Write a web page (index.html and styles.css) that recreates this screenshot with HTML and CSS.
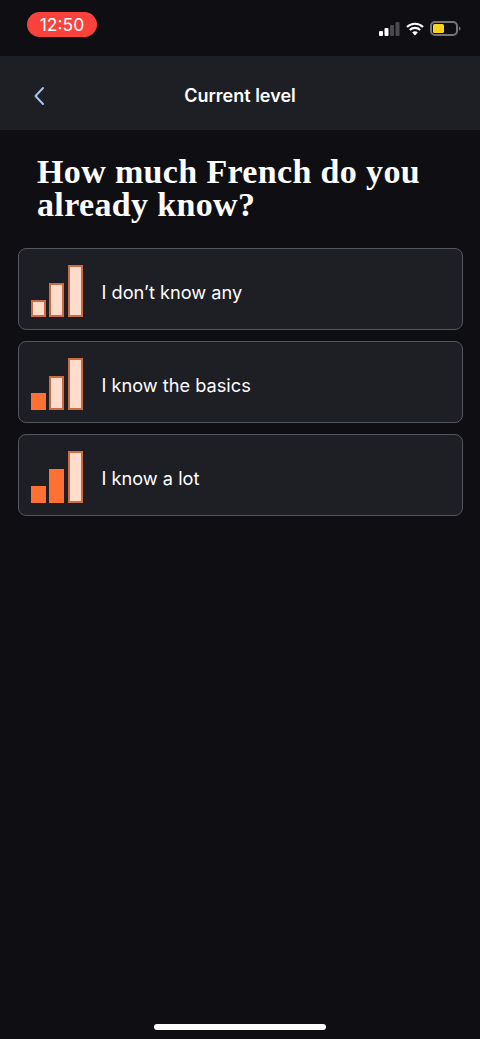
FILE: index.html
```html
<!DOCTYPE html>
<html lang="en">
<head>
<meta charset="utf-8">
<title>Current level</title>
<link rel="stylesheet" href="styles.css">
</head>
<body>
<div class="screen">
  <div class="status">
    <span class="time">12:50</span>
    <div class="status-icons">
      <svg class="signal" width="21" height="14" viewBox="0 0 21 14"><rect x="0" y="9" width="4" height="5" rx="1" fill="#fff"/><rect x="5.500" y="6" width="4" height="8" rx="1" fill="#fff"/><rect x="11" y="3" width="4" height="11" rx="1" fill="#4a4a4e"/><rect x="16.500" y="0" width="4" height="14" rx="1" fill="#4a4a4e"/></svg>
      <svg class="wifi" width="18" height="14" viewBox="0 0 18 14"><path d="M1 5a11.500 11.500 0 0 1 16 0M3.800 8a7.500 7.500 0 0 1 10.400 0" fill="none" stroke="#fff" stroke-width="2.200"/><path d="M6.200 10.400a3.800 3.800 0 0 1 5.600 0L9 13.600z" fill="#fff"/></svg>
      <svg class="battery" width="31" height="15" viewBox="0 0 31 15"><rect x="1" y="1" width="26" height="13" rx="4" fill="none" stroke="#77777a" stroke-width="2"/><rect x="3" y="3" width="11" height="9" rx="1.500" fill="#fcd21e"/><path d="M29 5.500c1.200.3 1.500 1 1.500 2s-.3 1.700-1.500 2z" fill="#77777a"/></svg>
    </div>
  </div>
  <header class="nav">
    <svg class="back" width="12" height="20" viewBox="0 0 12 20"><path d="M10 2 2.500 10 10 18" fill="none" stroke="#a6c4f0" stroke-width="2" stroke-linecap="round" stroke-linejoin="round"/></svg>
    <h2 class="nav-title">Current level</h2>
  </header>
  <h1 class="question">How much French do you already know?</h1>
  <div class="options">
    <div class="option">
      <div class="bars"><span class="bar b1"></span><span class="bar b2"></span><span class="bar b3"></span></div>
      <span class="label">I don’t know any</span>
    </div>
    <div class="option">
      <div class="bars"><span class="bar b1 on"></span><span class="bar b2"></span><span class="bar b3"></span></div>
      <span class="label">I know the basics</span>
    </div>
    <div class="option">
      <div class="bars"><span class="bar b1 on"></span><span class="bar b2 on"></span><span class="bar b3"></span></div>
      <span class="label">I know a lot</span>
    </div>
  </div>
  <div class="home"></div>
</div>
</body>
</html>
```
FILE: styles.css
```css
* { box-sizing: border-box; }
html, body { margin: 0; padding: 0; }
body { background: #0f0f13; color: #fff; font-family: "Inter", "Liberation Sans", sans-serif; }
.screen { width: 480px; height: 1039px; display: flex; flex-direction: column; overflow: hidden; }
.status { height: 56px; flex: none; display: flex; align-items: flex-start; justify-content: space-between; padding: 12px 19px 0 27px; }
.time { width: 70px; height: 25px; border-radius: 13px; background: #f9423c; color: #fff; font-size: 17.500px; line-height: 25px; text-align: center; font-family: "Inter", sans-serif; }
.status-icons { display: flex; align-items: center; gap: 6px; margin-top: 9px; }
.nav { height: 74px; flex: none; background: #1e1e25; display: flex; align-items: center; padding: 5px 0 0 33px; position: relative; }
.nav-title { position: absolute; left: 0; right: 0; margin: 0; text-align: center; font-size: 18px; font-weight: 600; line-height: 24px; }
.question { margin: 25px 30px 0 37px; font-family: "Liberation Serif", serif; font-size: 34px; line-height: 33px; font-weight: 700; letter-spacing: 0.350px; }
.options { display: flex; flex-direction: column; gap: 11px; margin: 27px 17.500px 0; }
.option { height: 82px; border: 1.500px solid #55555f; border-radius: 8px; background: #1e1e25; display: flex; align-items: center; padding-left: 12px; gap: 19px; }
.bars { display: flex; align-items: flex-end; gap: 3.500px; height: 52px; margin-top: 4px; }
.bar { width: 15px; background: #ffddcc; border: 2px solid #cc6c44; }
.bar.on { background: #ff7033; border-color: #ff7033; }
.b1 { height: 17px; }
.b2 { height: 34px; }
.b3 { height: 52px; }
.label { font-size: 18.200px; line-height: 24px; color: #fff; margin-top: 5px; }
.home { width: 172px; height: 6px; border-radius: 3px; background: #fff; margin: auto auto 9px; }
```
